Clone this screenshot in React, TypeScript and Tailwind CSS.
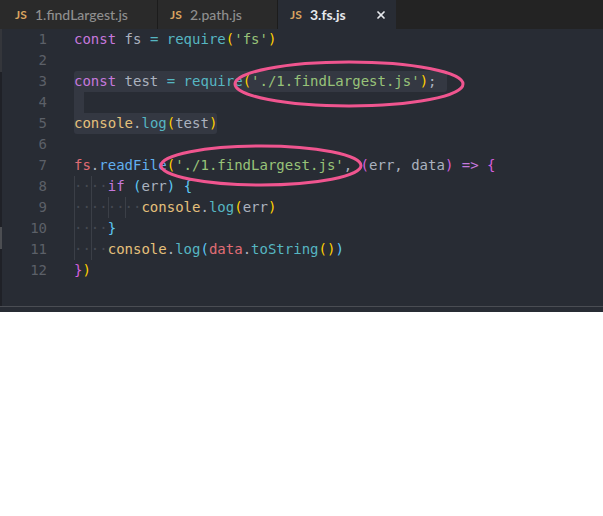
import { X } from "lucide-react";

const sans = "font-['Lato','Open_Sans',sans-serif]";

const c = {
  kw: "text-[#c678dd]",
  plain: "text-[#abb2bf]",
  op: "text-[#56b6c2]",
  fn: "text-[#56b6c2]",
  blue: "text-[#61afef]",
  red: "text-[#e06c75]",
  green: "text-[#98c379]",
  gold: "text-[#e5c07b]",
  yellow: "text-[#ffd000]",
  pink: "text-[#d55fde]",
  sky: "text-[#5cc8f5]",
};

type Tok = [string, string];

// indent = number of 2-space guide groups at the line start
const lines: { indent?: number; toks: Tok[]; sel?: string }[] = [
  { toks: [["const", c.kw], [" fs ", c.plain], ["=", c.op], [" ", c.plain], ["require", c.fn], ["(", c.yellow], ["'fs'", c.green], [")", c.yellow]] },
  { toks: [] },
  { sel: "rounded-t-[3px] rounded-br-[3px] pr-[10px]", toks: [["const", c.kw], [" test ", c.plain], ["=", c.op], [" ", c.plain], ["require", c.fn], ["(", c.yellow], ["'./1.findLargest.js'", c.green], [")", c.yellow], [";", c.plain]] },
  { sel: "w-[10px]", toks: [] },
  { sel: "rounded-b-[3px] rounded-tr-[3px]", toks: [["console", c.gold], [".", c.plain], ["log", c.fn], ["(", c.yellow], ["test", c.plain], [")", c.yellow]] },
  { toks: [] },
  { toks: [["fs", c.red], [".", c.plain], ["readFile", c.blue], ["(", c.yellow], ["'./1.findLargest.js'", c.green], [", ", c.plain], ["(", c.pink], ["err, data", c.plain], [")", c.pink], [" ", c.plain], ["=>", c.kw], [" ", c.plain], ["{", c.pink]] },
  { indent: 2, toks: [["if", c.kw], [" ", c.plain], ["(", c.sky], ["err", c.plain], [")", c.sky], [" ", c.plain], ["{", c.sky]] },
  { indent: 4, toks: [["console", c.gold], [".", c.plain], ["log", c.fn], ["(", c.yellow], ["err", c.plain], [")", c.yellow]] },
  { indent: 2, toks: [["}", c.sky]] },
  { indent: 2, toks: [["console", c.gold], [".", c.plain], ["log", c.fn], ["(", c.sky], ["data", c.red], [".", c.plain], ["toString", c.fn], ["(", c.yellow], [")", c.yellow], [")", c.sky]] },
  { toks: [["}", c.pink], [")", c.yellow]] },
];

function Tab({ name, active, className }: { name: string; active?: boolean; className: string }) {
  return (
    <div className={`flex h-full items-center ${className} ${active ? "bg-[#282c34]" : "border-r border-[#1c1c1c] bg-[#2a2a2a]"}`}>
      <span className="w-[20px] shrink-0 text-[12px] font-bold text-[#d9a45f]">JS</span>
      <span className={`text-[14px] ${active ? "font-bold text-[#e6e8ec]" : "font-medium text-[#8f8f8f]"}`}>{name}</span>
      {active ? <X size={12} strokeWidth={3.5} className="ml-[29px] text-[#e6e8ec]" /> : null}
    </div>
  );
}

export default function App() {
  return (
    <div className="relative h-[516px] w-[603px] overflow-hidden bg-white">
      <div className="flex h-[312px] w-full flex-col bg-[#282c34]">
        <div className={`flex h-[29px] shrink-0 bg-[#232323] ${sans}`}>
          <Tab name="1.findLargest.js" className="w-[158px] pl-[15px]" />
          <Tab name="2.path.js" className="w-[120px] pl-[12px]" />
          <Tab name="3.fs.js" active className="w-[118px] pl-[12px]" />
        </div>
        <div className="flex min-h-0 flex-1">
          <div className="flex w-[2px] shrink-0 flex-col bg-[#1f2127]">
            <div className="h-[43px] bg-[#34363b]" />
            <div className="h-[155px]" />
            <div className="h-[22px] bg-[#4c4e52]" />
          </div>
          <div className="w-[45px] shrink-0 font-['DejaVu_Sans_Mono',monospace] text-[14px] leading-[21px] text-[#5c6068]">
            {lines.map((_, i) => (
              <div key={i} className="h-[21px] text-right">{i + 1}</div>
            ))}
          </div>
          <div className="ml-[27px] min-w-0 flex-1 font-['DejaVu_Sans_Mono',monospace] text-[14px] leading-[21px]">
            {lines.map((line, i) => (
              <div key={i} className="h-[21px] whitespace-pre">
                <span className={line.sel ? `inline-block h-[21px] bg-[#343842] align-top ${line.sel}` : ""}>
                  {Array.from({ length: line.indent ?? 0 }).map((_, g) => (
                    <span key={g} className="inline-block h-[21px] align-top text-[#454952] shadow-[inset_1px_0_0_#3b3f47]">··</span>
                  ))}
                  {line.toks.map(([text, color], j) => (
                    <span key={j} className={color}>{text}</span>
                  ))}
                </span>
              </div>
            ))}
          </div>
        </div>
        <div className="h-[1px] shrink-0 bg-[#4a4d53]" />
        <div className="h-[5px] shrink-0" />
      </div>
      <svg className="absolute left-0 top-0" width="603" height="312" fill="none" stroke="#f0558f" strokeWidth="3">
        <ellipse cx="349" cy="84" rx="114" ry="22" />
        <ellipse cx="261" cy="165.5" rx="100" ry="19.5" />
      </svg>
    </div>
  );
}
